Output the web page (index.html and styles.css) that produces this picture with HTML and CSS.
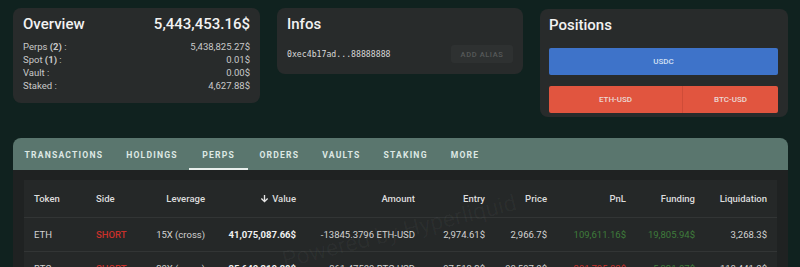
FILE: index.html
```html
<!DOCTYPE html>
<html lang="en">
<head>
    <meta charset="UTF-8">
    <title>Wallet Overview</title>
    <link rel="stylesheet" href="styles.css">
</head>
<body>
    <div class="cards">
        <div class="card overview">
            <div class="card-head">
                <h2>Overview</h2>
                <span class="total">5,443,453.16$</span>
            </div>
            <div class="line"><span>Perps <b>(2)</b> :</span><span>5,438,825.27$</span></div>
            <div class="line"><span>Spot <b>(1)</b> :</span><span>0.01$</span></div>
            <div class="line"><span>Vault :</span><span>0.00$</span></div>
            <div class="line"><span>Staked :</span><span>4,627.88$</span></div>
        </div>

        <div class="card infos">
            <h2>Infos</h2>
            <div class="address-row">
                <span class="address">0xec4b17ad...88888888</span>
                <button class="alias-button" disabled>ADD ALIAS</button>
            </div>
        </div>

        <div class="card positions">
            <h2>Positions</h2>
            <div class="bar bar-blue">
                <div class="segment">USDC</div>
            </div>
            <div class="bar bar-red">
                <div class="segment">ETH-USD</div>
                <div class="segment">BTC-USD</div>
            </div>
        </div>
    </div>

    <div class="panel">
        <div class="tabs">
            <div class="tab">TRANSACTIONS</div>
            <div class="tab">HOLDINGS</div>
            <div class="tab active">PERPS</div>
            <div class="tab">ORDERS</div>
            <div class="tab">VAULTS</div>
            <div class="tab">STAKING</div>
            <div class="tab">MORE</div>
        </div>

        <div class="panel-body">
            <div class="table">
                <div class="row head">
                    <div>Token</div>
                    <div>Side</div>
                    <div class="num">Leverage</div>
                    <div class="num sort">
                        <svg width="9" height="9" viewBox="0 0 10 10"><path d="M5 1v7.5M1.5 5 5 8.5 8.5 5" fill="none" stroke="#e6e6e6" stroke-width="1.5"/></svg>
                        Value
                    </div>
                    <div class="num">Amount</div>
                    <div class="num">Entry</div>
                    <div class="num">Price</div>
                    <div class="num">PnL</div>
                    <div class="num">Funding</div>
                    <div class="num">Liquidation</div>
                </div>
                <div class="row">
                    <div>ETH</div>
                    <div class="short">SHORT</div>
                    <div class="num">15X (cross)</div>
                    <div class="num strong">41,075,087.66$</div>
                    <div class="num">-13845.3796 ETH-USD</div>
                    <div class="num">2,974.61$</div>
                    <div class="num">2,966.7$</div>
                    <div class="num gain">109,611.16$</div>
                    <div class="num gain">19,805.94$</div>
                    <div class="num">3,268.3$</div>
                </div>
                <div class="row">
                    <div>BTC</div>
                    <div class="short">SHORT</div>
                    <div class="num">20X (cross)</div>
                    <div class="num strong">35,640,210.38$</div>
                    <div class="num">-361.47509 BTC-USD</div>
                    <div class="num">97,513.2$</div>
                    <div class="num">98,597.0$</div>
                    <div class="num loss">-391,795.83$</div>
                    <div class="num gain">5,321.07$</div>
                    <div class="num">118,441.0$</div>
                </div>
                <div class="watermark">Powered by Hyperliquid</div>
            </div>
        </div>
    </div>
</body>
</html>
```

FILE: styles.css
```css
* {
    box-sizing: border-box;
    margin: 0;
    padding: 0;
    font-family: Roboto, 'Liberation Sans', sans-serif;
}

body {
    background-color: #10221f;
    height: 267px;
    overflow: hidden;
    color: #d6d6d6;
}

.cards {
    display: flex;
    align-items: flex-start;
    gap: 17px;
    padding: 8px 12px 0 13px;
}

.card {
    background-color: #282b2b;
    border-radius: 8px;
    padding: 6px 10px;
}

.card h2 {
    color: #f2f2f2;
    font-size: 15px;
    font-weight: 500;
    line-height: 20px;
}

.overview {
    width: 247px;
    height: 95px;
}

.card-head {
    display: flex;
    justify-content: space-between;
    align-items: center;
    margin-bottom: 6px;
}

.total {
    color: #f2f2f2;
    font-size: 15px;
    font-weight: 500;
}

.line {
    display: flex;
    justify-content: space-between;
    font-size: 9.5px;
    line-height: 13px;
    color: #c9c9c9;
}

.line b {
    font-weight: 700;
}

.infos {
    width: 246px;
    height: 66px;
}

.address-row {
    display: flex;
    justify-content: space-between;
    align-items: center;
    margin-top: 11px;
}

.address {
    font-family: 'DejaVu Sans Mono', 'Liberation Mono', monospace;
    font-size: 8.2px;
    color: #d8d8d8;
}

.alias-button {
    width: 62px;
    height: 18px;
    border: none;
    border-radius: 3px;
    background-color: #2e3131;
    color: #565959;
    font-size: 7.5px;
    font-weight: 500;
    letter-spacing: 0.6px;
}

.positions {
    width: 248px;
    height: 108px;
    margin-top: 1px;
    padding: 6px 10px 10px 9px;
}

.bar {
    display: flex;
    height: 27px;
    border-radius: 2px;
    overflow: hidden;
}

.bar-blue {
    margin-top: 13px;
    background-color: #3e73c9;
}

.bar-red {
    margin-top: 11px;
    background-color: #e1553f;
}

.segment {
    flex: 1;
    display: flex;
    align-items: center;
    justify-content: center;
    font-size: 8px;
    font-weight: 500;
    color: #ecd9d5;
}

.bar-blue .segment {
    color: #d3e0f3;
}

.bar-red .segment:first-child {
    flex: 0 0 134px;
    border-right: 1px solid #cf4c38;
}

.panel {
    margin: 21px 12px 0 13px;
    border-radius: 8px 8px 0 0;
    overflow: hidden;
}

.tabs {
    display: flex;
    height: 32px;
    background-color: #5a766e;
}

.tab {
    display: flex;
    align-items: center;
    padding: 2px 11.5px 0;
    font-size: 8.6px;
    font-weight: 700;
    letter-spacing: 1.2px;
    color: #dde8e4;
}

.tab.active {
    box-shadow: inset 0 -2px 0 #e8efec;
    padding: 2px 13px 0;
}

.panel-body {
    background-color: #1f2222;
    padding: 10px 11px 0;
    height: 100px;
}

.table {
    position: relative;
    background-color: #252828;
    padding: 0 10px;
    overflow: hidden;
    height: 90px;
}

.row {
    display: grid;
    grid-template-columns: 62px 54px 55px 91px 119px 70px 62px 79px 69px 72px;
    align-items: center;
    height: 34px;
    border-bottom: 1px solid #323535;
    margin: 0 -10px;
    padding: 0 10px;
    font-size: 9.5px;
    color: #d2d2d2;
}

.row.head {
    height: 38px;
    font-weight: 500;
    color: #dcdcdc;
}

.num {
    text-align: right;
    white-space: nowrap;
}

.sort {
    display: flex;
    justify-content: flex-end;
    align-items: center;
    gap: 3px;
}

.strong {
    font-weight: 700;
    color: #f0f0f0;
}

.short {
    color: #c9302a;
    font-weight: 500;
}

.gain {
    color: #3f7c3b;
}

.loss {
    color: #c9302a;
}

.watermark {
    position: absolute;
    left: 255px;
    top: 38px;
    font-size: 23px;
    color: rgba(255, 255, 255, 0.035);
    transform: rotate(-14deg);
    white-space: nowrap;
    pointer-events: none;
}
```
